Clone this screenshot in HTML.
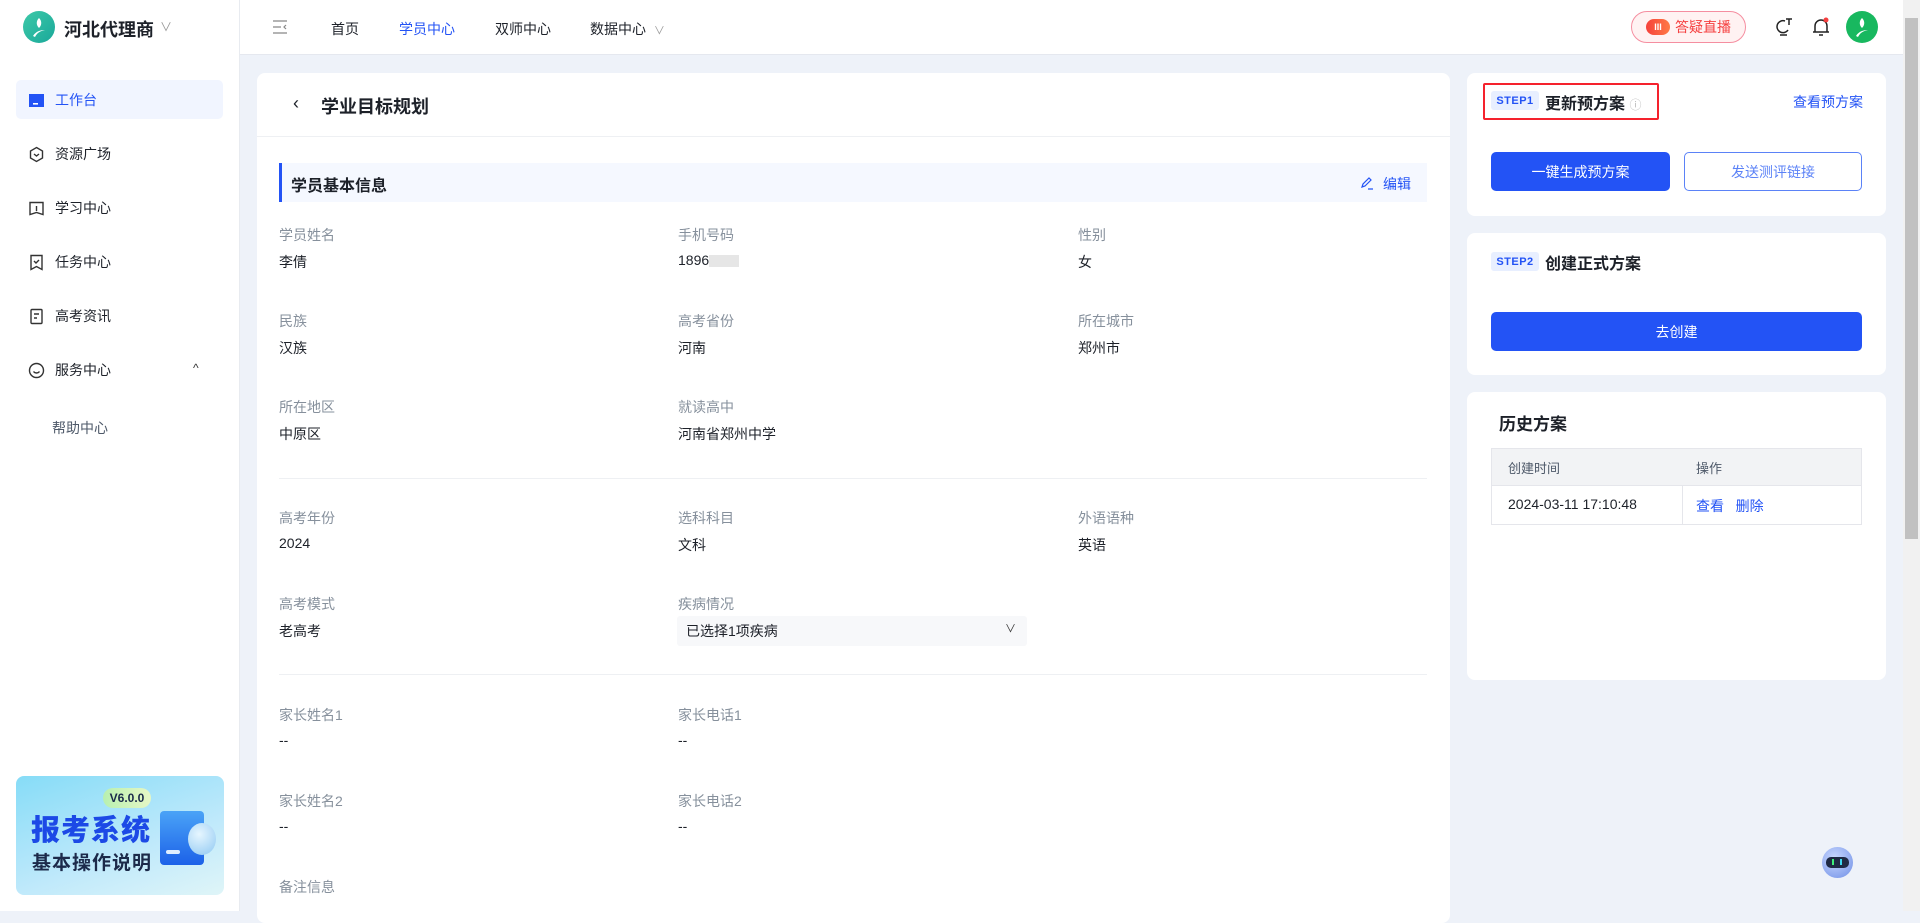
<!DOCTYPE html>
<html><head><meta charset="utf-8"><style>
*{margin:0;padding:0;box-sizing:border-box}
body{width:1920px;height:911px;overflow:hidden;background:#eef2f9;font-family:"Liberation Sans","Noto Sans CJK SC",sans-serif;color:#1d2129;position:relative}
.a{position:absolute}
.side{left:0;top:0;width:240px;height:911px;background:#fff;border-right:1px solid #e8ebf0}
.top{left:240px;top:0;width:1663px;height:55px;background:#fff;border-bottom:1px solid #e5e8ef}
.mi{position:absolute;left:28px;font-size:14px;color:#1d2129;display:flex;align-items:center;gap:10px}
.mi svg{width:17px;height:17px}
.card{background:#fff;border-radius:8px}
.lb{position:absolute;font-size:14px;color:#86909c}
.vl{position:absolute;font-size:14px;color:#1d2129}
.btn{position:absolute;border-radius:5px;font-size:14px;display:flex;align-items:center;justify-content:center}
.step{position:absolute;background:#e8efff;color:#2353f5;font-weight:bold;font-size:11px;border-radius:3px;display:flex;align-items:center;justify-content:center;letter-spacing:.5px}
</style></head><body>
<div class="a side">
 <div class="a" style="left:23px;top:11px;width:32px;height:32px;border-radius:50%;background:linear-gradient(135deg,#3dc9a8,#1aa89a)"></div>
 <svg class="a" style="left:29px;top:16px" width="20" height="22" viewBox="0 0 20 22"><path d="M10 2c-3 3-3 7 0 10c3-3 3-7 0-10zM4 20c3-5 8-6 12-6c-5 1-8 3-10 7z" fill="#fff"/></svg>
 <div class="a" style="left:64px;top:16px;font-size:18px;font-weight:bold">河北代理商</div>
 <div class="a" style="left:160px;top:18px;font-size:12px;color:#999">∨</div>
 <div class="a" style="left:16px;top:80px;width:207px;height:39px;background:#f1f5ff;border-radius:5px"></div>
 <div class="mi" style="top:90px;color:#2353f5"><svg viewBox="0 0 17 17"><rect x="1" y="2" width="15" height="13" fill="#2353f5"/><rect x="5" y="11" width="5" height="1.6" fill="#fff"/></svg>工作台</div>
 <div class="mi" style="top:144px"><svg viewBox="0 0 17 17" fill="none" stroke="#333" stroke-width="1.4"><path d="M8.5 1.5l6 3.5v7l-6 3.5l-6-3.5v-7z"/><path d="M6 8l2.5 2l2.5-2"/></svg>资源广场</div>
 <div class="mi" style="top:198px"><svg viewBox="0 0 17 17" fill="none" stroke="#333" stroke-width="1.4"><path d="M2 2.5h13v12l-6.5-2l-6.5 2z"/><path d="M8.5 6v5"/></svg>学习中心</div>
 <div class="mi" style="top:252px"><svg viewBox="0 0 17 17" fill="none" stroke="#333" stroke-width="1.4"><path d="M3 1.5h11v14l-5.5-3l-5.5 3z"/><path d="M6 7l2 2l3-3"/></svg>任务中心</div>
 <div class="mi" style="top:306px"><svg viewBox="0 0 17 17" fill="none" stroke="#333" stroke-width="1.4"><rect x="3" y="1.5" width="11" height="14" rx="1"/><path d="M6 6h5M6 10h3"/></svg>高考资讯</div>
 <div class="mi" style="top:360px"><svg viewBox="0 0 17 17" fill="none" stroke="#333" stroke-width="1.4"><circle cx="8.5" cy="8.5" r="7"/><path d="M5.5 9.5c1.5 2 4.5 2 6 0"/></svg>服务中心</div>
 <div class="a" style="left:193px;top:361px;font-size:12px;color:#333">^</div>
 <div class="a" style="left:52px;top:418px;font-size:14px;color:#4e5969">帮助中心</div>
 <div class="a" style="left:16px;top:776px;width:208px;height:119px;border-radius:8px;background:linear-gradient(160deg,#86dcf7 0%,#bfe9fb 60%,#dff5f8 100%)"></div>
 <div class="a" style="left:103px;top:788px;width:48px;height:20px;border-radius:10px;background:linear-gradient(90deg,#b8f0b0,#e6f7c6);font-size:12px;font-weight:bold;color:#1a2a4a;text-align:center;line-height:20px">V6.0.0</div>
 <div class="a" style="left:31px;top:807px;font-size:29px;font-weight:900;color:#1c49e6;letter-spacing:1px">报考系统</div>
 <div class="a" style="left:32px;top:848px;font-size:19px;font-weight:bold;color:#1c2a4a;letter-spacing:1px">基本操作说明</div>
 <div class="a" style="left:160px;top:811px;width:44px;height:54px;border-radius:4px;background:linear-gradient(180deg,#4aa3f7,#1c61e8)"></div>
 <div class="a" style="left:166px;top:850px;width:14px;height:4px;border-radius:2px;background:#dfeeff"></div>
 <div class="a" style="left:188px;top:823px;width:28px;height:32px;border-radius:50%;background:radial-gradient(circle at 40% 35%,#e6f6ff,#8fc8f2)"></div>
</div>
<div class="a top">
 <svg class="a" style="left:32px;top:20px" width="16" height="14" viewBox="0 0 16 14" fill="none" stroke="#888" stroke-width="1.2"><path d="M1 1h14M1 7h8M1 13h14M14 5l-2 2l2 2"/></svg>
 <div class="a" style="left:91px;top:19px;font-size:14px">首页</div>
 <div class="a" style="left:159px;top:19px;font-size:14px;color:#2353f5">学员中心</div>
 <div class="a" style="left:255px;top:19px;font-size:14px">双师中心</div>
 <div class="a" style="left:350px;top:19px;font-size:14px">数据中心 <span style="color:#999;font-size:11px;margin-left:4px">∨</span></div>
 <div class="a" style="left:1391px;top:11px;width:115px;height:32px;border-radius:16px;border:1px solid #f58ea0;background:#fff2f2"></div>
 <div class="a" style="left:1406px;top:19px;width:24px;height:16px;border-radius:8px;background:linear-gradient(90deg,#f5423c,#ff7a45);color:#fff;font-size:9px;text-align:center;line-height:16px;font-weight:bold">III</div>
 <div class="a" style="left:1435px;top:17px;font-size:14px;color:#f53f3f">答疑直播</div>
 <svg class="a" style="left:1535px;top:17px" width="18" height="20" viewBox="0 0 18 20" fill="none" stroke="#222" stroke-width="1.5"><path d="M10 4a6 6 0 1 0 3 9"/><path d="M5 18h7M11 2h6M14 2v6"/></svg>
 <svg class="a" style="left:1572px;top:16px" width="18" height="22" viewBox="0 0 18 22" fill="none" stroke="#222" stroke-width="1.5"><path d="M3 16V10a6 6 0 0 1 12 0v6M1 16h16M7 19h4"/><circle cx="14" cy="4" r="2.5" fill="#f53f3f" stroke="none"/></svg>
 <div class="a" style="left:1606px;top:11px;width:32px;height:32px;border-radius:50%;background:#18b85f"></div>
 <svg class="a" style="left:1612px;top:16px" width="20" height="22" viewBox="0 0 20 22"><path d="M10 2c-3 3-3 7 0 10c3-3 3-7 0-10zM4 20c3-5 8-6 12-6c-5 1-8 3-10 7z" fill="#fff"/></svg>
</div>
<div class="a" style="left:1903px;top:0;width:17px;height:911px;background:#f1f1f1"></div>
<div class="a" style="left:1905px;top:18px;width:13px;height:521px;background:#c1c1c1"></div>

<div class="a card" style="left:257px;top:73px;width:1193px;height:850px">
 <div class="a" style="left:0;top:63px;width:1193px;height:1px;background:#eef0f3"></div>
 <div class="a" style="left:36px;top:20px;font-size:18px">‹</div>
 <div class="a" style="left:64px;top:20px;font-size:18px;font-weight:bold">学业目标规划</div>
 <div class="a" style="left:22px;top:90px;width:1148px;height:39px;background:#f5f8ff;border-left:3px solid #2353f5"></div>
 <div class="a" style="left:34px;top:99px;font-size:16px;font-weight:bold">学员基本信息</div>
 <svg class="a" style="left:1103px;top:103px" width="14" height="14" viewBox="0 0 14 14" fill="none" stroke="#2353f5" stroke-width="1.2"><path d="M2 11l1-3l6-6l2 2l-6 6z M8 13h5"/></svg>
 <div class="a" style="left:1126px;top:101px;font-size:14px;color:#2353f5">编辑</div>
</div>
<div class="lb" style="left:279px;top:225px">学员姓名</div><div class="vl" style="left:279px;top:252px">李倩</div>
<div class="lb" style="left:678px;top:225px">手机号码</div><div class="vl" style="left:678px;top:252px">1896<span style="display:inline-block;width:30px;height:12px;background:#e6e6e6;vertical-align:middle"></span></div>
<div class="lb" style="left:1078px;top:225px">性别</div><div class="vl" style="left:1078px;top:252px">女</div>
<div class="lb" style="left:279px;top:311px">民族</div><div class="vl" style="left:279px;top:338px">汉族</div>
<div class="lb" style="left:678px;top:311px">高考省份</div><div class="vl" style="left:678px;top:338px">河南</div>
<div class="lb" style="left:1078px;top:311px">所在城市</div><div class="vl" style="left:1078px;top:338px">郑州市</div>
<div class="lb" style="left:279px;top:397px">所在地区</div><div class="vl" style="left:279px;top:424px">中原区</div>
<div class="lb" style="left:678px;top:397px">就读高中</div><div class="vl" style="left:678px;top:424px">河南省郑州中学</div>
<div class="a" style="left:279px;top:478px;width:1148px;height:1px;background:#eef0f3"></div>
<div class="lb" style="left:279px;top:508px">高考年份</div><div class="vl" style="left:279px;top:535px">2024</div>
<div class="lb" style="left:678px;top:508px">选科科目</div><div class="vl" style="left:678px;top:535px">文科</div>
<div class="lb" style="left:1078px;top:508px">外语语种</div><div class="vl" style="left:1078px;top:535px">英语</div>
<div class="lb" style="left:279px;top:594px">高考模式</div><div class="vl" style="left:279px;top:621px">老高考</div>
<div class="lb" style="left:678px;top:594px">疾病情况</div>
<div class="a" style="left:677px;top:616px;width:350px;height:30px;background:#f7f8fa;border-radius:3px"></div>
<div class="vl" style="left:686px;top:621px">已选择1项疾病</div>
<div class="a" style="left:1005px;top:620px;font-size:11px;color:#333">∨</div>
<div class="a" style="left:279px;top:674px;width:1148px;height:1px;background:#eef0f3"></div>
<div class="lb" style="left:279px;top:705px">家长姓名1</div><div class="vl" style="left:279px;top:732px">--</div>
<div class="lb" style="left:678px;top:705px">家长电话1</div><div class="vl" style="left:678px;top:732px">--</div>
<div class="lb" style="left:279px;top:791px">家长姓名2</div><div class="vl" style="left:279px;top:818px">--</div>
<div class="lb" style="left:678px;top:791px">家长电话2</div><div class="vl" style="left:678px;top:818px">--</div>
<div class="lb" style="left:279px;top:877px">备注信息</div>

<div class="a card" style="left:1467px;top:73px;width:419px;height:143px"></div>
<div class="a" style="left:1483px;top:83px;width:176px;height:37px;border:2px solid #f5222d;border-radius:2px"></div>
<div class="step" style="left:1491px;top:91px;width:48px;height:19px">STEP1</div>
<div class="a" style="left:1545px;top:90px;font-size:16px;font-weight:bold">更新预方案 <span style="color:#bbb;font-size:12px;font-weight:normal">ⓘ</span></div>
<div class="a" style="left:1793px;top:92px;font-size:14px;color:#2353f5">查看预方案</div>
<div class="btn" style="left:1491px;top:152px;width:179px;height:39px;background:#2353f5;color:#fff">一键生成预方案</div>
<div class="btn" style="left:1684px;top:152px;width:178px;height:39px;border:1px solid #5b82f7;color:#5b82f7">发送测评链接</div>

<div class="a card" style="left:1467px;top:233px;width:419px;height:142px"></div>
<div class="step" style="left:1491px;top:252px;width:48px;height:19px">STEP2</div>
<div class="a" style="left:1545px;top:250px;font-size:16px;font-weight:bold">创建正式方案</div>
<div class="btn" style="left:1491px;top:312px;width:371px;height:39px;background:#2353f5;color:#fff">去创建</div>

<div class="a card" style="left:1467px;top:392px;width:419px;height:288px"></div>
<div class="a" style="left:1499px;top:410px;font-size:17px;font-weight:bold">历史方案</div>
<div class="a" style="left:1491px;top:448px;width:371px;height:77px;border:1px solid #e5e6eb"></div>
<div class="a" style="left:1492px;top:449px;width:369px;height:37px;background:#f2f3f5;border-bottom:1px solid #e5e6eb"></div>
<div class="a" style="left:1682px;top:486px;width:1px;height:38px;background:#e5e6eb"></div>
<div class="a" style="left:1508px;top:458px;font-size:13px;color:#4e5969">创建时间</div>
<div class="a" style="left:1696px;top:458px;font-size:13px;color:#4e5969">操作</div>
<div class="a" style="left:1508px;top:496px;font-size:14px">2024-03-11 17:10:48</div>
<div class="a" style="left:1696px;top:496px;font-size:14px;color:#2353f5">查看 &nbsp; 删除</div>

<div class="a" style="left:1822px;top:847px;width:31px;height:31px;border-radius:50%;background:radial-gradient(circle at 40% 35%,#c9d8ff,#6f8fe6)"></div>
<div class="a" style="left:1826px;top:857px;width:23px;height:11px;border-radius:5px;background:#1f2a44"></div>
<div class="a" style="left:1832px;top:859px;width:2px;height:6px;background:#3ef07a"></div>
<div class="a" style="left:1840px;top:859px;width:2px;height:6px;background:#3ed8f0"></div>
</body></html>
